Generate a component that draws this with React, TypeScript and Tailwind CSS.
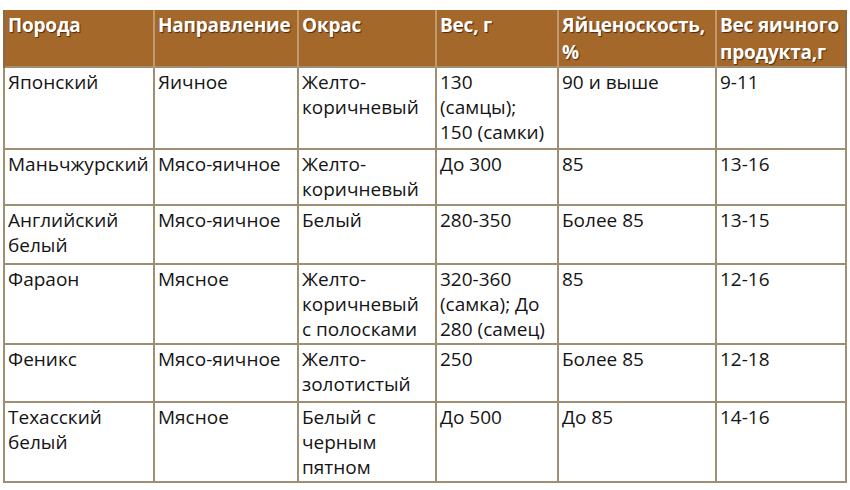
const HEAD = ['Порода', 'Направление', 'Окрас', 'Вес, г', 'Яйценоскость, %', 'Вес яичного продукта,г']

const ROWS: { h: string; cells: string[][] }[] = [
  { h: 'h-[82px]', cells: [['Японский'], ['Яичное'], ['Желто-', 'коричневый'], ['130', '(самцы);', '150 (самки)'], ['90 и выше'], ['9-11']] },
  { h: 'h-[56px]', cells: [['Маньчжурский'], ['Мясо-яичное'], ['Желто-', 'коричневый'], ['До 300'], ['85'], ['13-16']] },
  { h: 'h-[59px]', cells: [['Английский', 'белый'], ['Мясо-яичное'], ['Белый'], ['280-350'], ['Более 85'], ['13-15']] },
  { h: 'h-[80px]', cells: [['Фараон'], ['Мясное'], ['Желто-', 'коричневый', 'с полосками'], ['320-360', '(самка); До', '280 (самец)'], ['85'], ['12-16']] },
  { h: 'h-[58px]', cells: [['Феникс'], ['Мясо-яичное'], ['Желто-', 'золотистый'], ['250'], ['Более 85'], ['12-18']] },
  { h: 'h-[80px]', cells: [['Техасский', 'белый'], ['Мясное'], ['Белый с', 'черным', 'пятном'], ['До 500'], ['До 85'], ['14-16']] },
]

const WIDTHS = ['w-[150px]', 'w-[144px]', 'w-[138px]', 'w-[122px]', 'w-[158px]', 'w-[130px]']

export default function App() {
  return (
    <div className="h-[490px] w-[850px] overflow-hidden bg-white pl-[3px] pt-[10px] font-['Open_Sans',sans-serif]">
      <table className="w-[843px] table-fixed border-collapse">
        <colgroup>
          {WIDTHS.map((w) => (
            <col key={w} className={w} />
          ))}
        </colgroup>
        <thead>
          <tr className="h-[55px] bg-[#a4682b]">
            {HEAD.map((t) => (
              <th
                key={t}
                className="border-x-2 border-[#c09a6e] px-[3px] pt-[2px] text-left align-top text-[19px] leading-[27px] font-bold tracking-[-0.2px] text-white [text-shadow:1px_1px_1px_rgba(40,20,0,0.7)] first:border-l-[#8a6a45] last:border-r-[#8a6a45]"
              >
                {t}
              </th>
            ))}
          </tr>
        </thead>
        <tbody>
          {ROWS.map((r, i) => (
            <tr key={i} className={r.h}>
              {r.cells.map((lines, j) => (
                <td
                  key={j}
                  className="border-2 border-[#9e8f72] px-[3px] pt-[2px] pb-0 align-top text-[19px] leading-[25px] text-[#141414]"
                >
                  {lines.map((l) => (
                    <div key={l}>{l}</div>
                  ))}
                </td>
              ))}
            </tr>
          ))}
        </tbody>
      </table>
    </div>
  )
}
